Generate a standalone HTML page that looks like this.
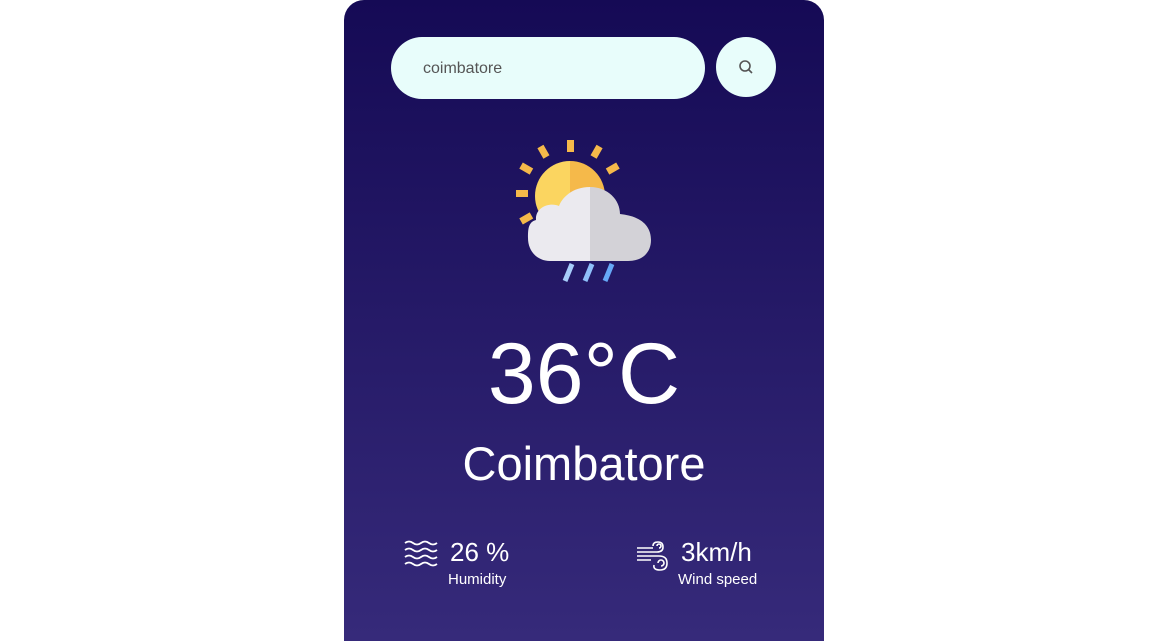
<!DOCTYPE html>
<html><head><style>
html,body{margin:0;width:1170px;height:641px;background:#fff;overflow:hidden;font-family:"Segoe UI","Liberation Sans",sans-serif;}
.card{position:absolute;left:344px;top:0;width:480px;height:641px;border-radius:20px 20px 0 0;background:linear-gradient(#150a55,#362a7a);}
.inp{position:absolute;left:47px;top:37px;width:314px;height:62px;border-radius:31px;background:#e8fdfb;}
.inp span{position:absolute;left:32px;top:24px;font-size:16px;line-height:16px;color:#555;}
.btn{position:absolute;left:372px;top:37px;width:60px;height:60px;border-radius:50%;background:#e8fdfb;}
.t{position:absolute;color:#fff;white-space:nowrap;}
</style></head><body>
<div class="card">
<div class="inp"><span>coimbatore</span></div>
<div class="btn"><svg width="60" height="60"><circle cx="29" cy="29" r="5" fill="none" stroke="#555" stroke-width="1.6"/><line x1="32.5" y1="32.5" x2="36" y2="36" stroke="#555" stroke-width="1.6"/></svg></div>
<svg style="position:absolute;left:156px;top:130px" width="170" height="160">
<g fill="#f5b94a">
<rect x="67" y="10" width="7" height="12"/>
<rect x="40" y="16" width="7" height="12" transform="rotate(-30 43 22)"/>
<rect x="93" y="16" width="7" height="12" transform="rotate(30 97 22)"/>
<rect x="23" y="33" width="7" height="12" transform="rotate(-60 26 39)"/>
<rect x="109" y="33" width="7" height="12" transform="rotate(60 113 39)"/>
<rect x="16" y="60" width="12" height="7"/>
<rect x="23" y="82" width="7" height="12" transform="rotate(60 26 88)"/>
</g>
<path d="M70 31 A35 35 0 0 0 70 101Z" fill="#fbd560"/>
<path d="M70 31 A35 35 0 0 1 70 101Z" fill="#f5b94a"/>
<path d="M90 57 C72 57 62 68 59 76 C50 72 35 77 36 90 C28 92 28 100 28 108 C28 122 38 131 50 131 L90 131Z" fill="#ebeaef"/>
<path d="M90 57 C108 57 120 70 120 84 C140 86 151 95 151 110 C151 122 143 131 128 131 L90 131Z" fill="#d3d2d7"/>
<g stroke-width="5"><line x1="72" y1="134" x2="65" y2="151" stroke="#a7cdfb"/><line x1="92" y1="134" x2="85" y2="151" stroke="#8fc0fb"/><line x1="112" y1="134" x2="105" y2="151" stroke="#66a8f7"/></g>
</svg>
<div class="t" style="left:0;width:480px;text-align:center;top:322px;font-size:86px;line-height:104px;">36°C</div>
<div class="t" style="left:0;width:480px;text-align:center;top:435px;font-size:47px;line-height:58px;">Coimbatore</div>
<svg style="position:absolute;left:60px;top:540px" width="34" height="30" fill="none" stroke="#fff" stroke-width="1.8">
<path d="M1 3q4-3 8 0t8 0t8 0t8 0M1 10q4-3 8 0t8 0t8 0t8 0M1 17q4-3 8 0t8 0t8 0t8 0M1 24q4-3 8 0t8 0t8 0t8 0"/></svg>
<div class="t" style="left:106px;top:535px;font-size:26px;line-height:34px;">26 %</div>
<div class="t" style="left:104px;top:570px;font-size:15px;line-height:20px;">Humidity</div>
<svg style="position:absolute;left:291px;top:540px" width="34" height="36" fill="none" stroke="#fff" stroke-width="1.6">
<path d="M2 8h16M2 12h20q6 0 6-5t-5-5t-5 4M2 16h22q8 0 8 7t-7 7t-6-5M2 20h14"/><path d="M24 8a2 2 0 1 0-2-2M26 26a3 3 0 1 0-3-3"/></svg>
<div class="t" style="left:337px;top:535px;font-size:26px;line-height:34px;">3km/h</div>
<div class="t" style="left:334px;top:570px;font-size:15px;line-height:20px;">Wind speed</div>
</div>
</body></html>
